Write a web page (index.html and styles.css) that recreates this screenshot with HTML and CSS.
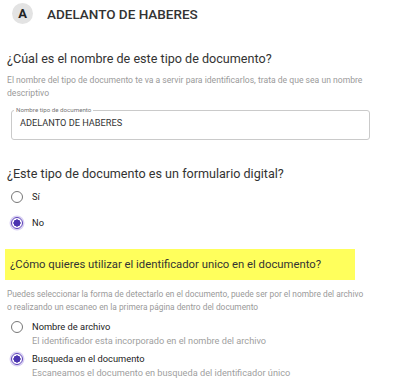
FILE: index.html
```html
<!DOCTYPE html>
<html lang="es">
<head>
    <meta charset="UTF-8">
    <title>Tipo de documento</title>
    <link rel="stylesheet" href="styles.css">
</head>
<body>
    <div class="header">
        <div class="avatar">A</div>
        <div class="header-title">ADELANTO DE HABERES</div>
    </div>

    <div class="question q-name">¿Cúal es el nombre de este tipo de documento?</div>
    <div class="help">El nombre del tipo de documento te va a servir para identificarlos, trata de que sea un nombre descriptivo</div>
    <fieldset class="field">
        <legend>Nombre tipo de documento</legend>
        <div class="field-value">ADELANTO DE HABERES</div>
    </fieldset>

    <div class="question q-form">¿Este tipo de documento es un formulario digital?</div>
    <div class="options">
        <label class="option"><span class="radio"></span><span class="option-label">Sí</span></label>
        <label class="option"><span class="radio checked"></span><span class="option-label">No</span></label>
    </div>

    <div class="question highlight">¿Cómo quieres utilizar el identificador unico en el documento?</div>
    <div class="help help-id">Puedes seleccionar la forma de detectarlo en el documento, puede ser por el nombre del archivo o realizando un escaneo en la primera página dentro del documento</div>
    <div class="options tall">
        <label class="option">
            <span class="radio"></span>
            <span class="option-text">
                <span class="option-label">Nombre de archivo</span>
                <span class="option-sub">El identificador esta incorporado en el nombre del archivo</span>
            </span>
        </label>
        <label class="option">
            <span class="radio checked"></span>
            <span class="option-text">
                <span class="option-label">Busqueda en el documento</span>
                <span class="option-sub">Escaneamos el documento en busqueda del identificador único</span>
            </span>
        </label>
    </div>
</body>
</html>
```

FILE: styles.css
```css
body {
    font-family: Roboto, "Noto Sans", Arial, sans-serif;
    margin: 0;
    padding: 0 28px 0 7px;
    color: #333;
    background: #fff;
}

.header {
    display: flex;
    align-items: center;
    gap: 14px;
    padding-top: 3px;
    margin-left: 5px;
    height: 21px;
}

.avatar {
    width: 21px;
    height: 21px;
    border-radius: 50%;
    background-color: #e3e3e3;
    display: flex;
    align-items: center;
    justify-content: center;
    font-weight: bold;
    font-size: 13px;
    color: #222;
}

.header-title {
    font-size: 13.5px;
    font-weight: 500;
    color: #333;
}

.question {
    font-size: 12.6px;
    line-height: 18px;
    color: #333;
}

.q-name {
    margin-top: 26px;
}

.q-form {
    margin-top: 25px;
}

.highlight {
    font-size: 11.3px;
    background-color: #ffff5c;
    margin-top: 20px;
    margin-left: -2px;
    padding: 7px 5px 6px 5px;
    width: 340px;
}

.help {
    font-size: 8.6px;
    line-height: 13px;
    color: #9a9a9a;
    margin-top: 6px;
}

.help-id {
    font-size: 8.35px;
    margin-top: 8px;
    margin-right: 6px;
}

.field {
    margin: 6px 2px 0 4px;
    border: 1px solid #cacaca;
    border-radius: 3px;
    padding: 3px 8px 10px;
    min-width: 0;
}

.field legend {
    font-size: 6.2px;
    line-height: 8px;
    color: #777;
    padding: 0 2px;
    margin-left: -6px;
}

.field-value {
    font-size: 9.2px;
    line-height: 12px;
    color: #333;
}

.options {
    display: flex;
    flex-direction: column;
    gap: 14px;
    margin-top: 8px;
    margin-left: 4px;
}

.options.tall {
    gap: 6px;
    margin-top: 7px;
}

.option {
    display: flex;
    align-items: flex-start;
    gap: 9px;
}

.radio {
    width: 12px;
    height: 12px;
    border: 1.3px solid #777;
    border-radius: 50%;
    box-sizing: border-box;
    flex-shrink: 0;
}

.radio.checked {
    border-color: #5b3fb8;
    background: radial-gradient(circle, #4b34b0 0 3.4px, #fff 3.8px);
    box-shadow: 0 0 0 1.5px #d9d1f3;
}

.option-label {
    font-size: 9.3px;
    line-height: 12px;
    color: #222;
}

.option-text {
    display: flex;
    flex-direction: column;
    gap: 2px;
}

.option-sub {
    font-size: 9.2px;
    line-height: 12px;
    color: #a0a0a0;
}
```
